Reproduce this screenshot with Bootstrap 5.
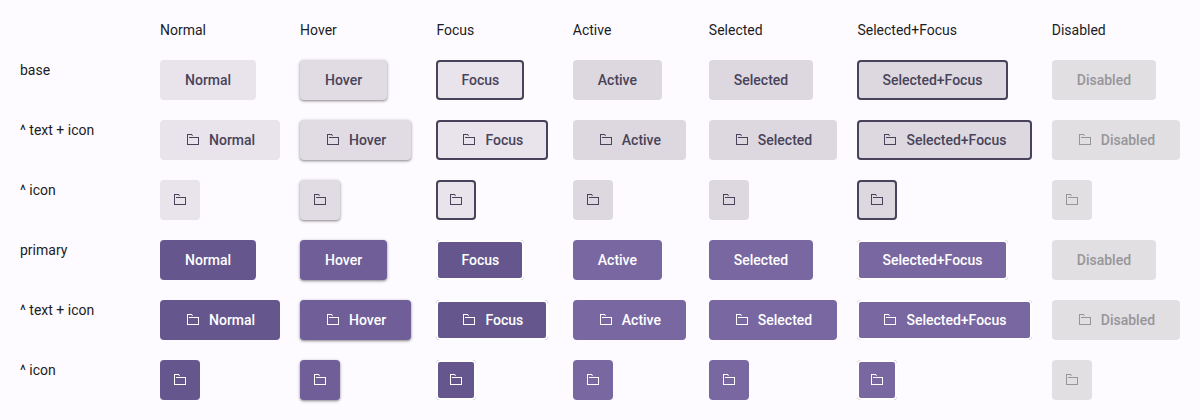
<!DOCTYPE html>
<html lang="en">
<head>
<meta charset="utf-8">
<meta name="viewport" content="width=device-width, initial-scale=1">
<title>Button states</title>
<link href="https://cdn.jsdelivr.net/npm/bootstrap@5.3.0/dist/css/bootstrap.min.css" rel="stylesheet">
<style>
  body { background: #fdfbff; color: #1c1b1e; font: 400 14px/20px Roboto, sans-serif; }
  .state-grid { grid-template-columns: 120px 120.1px 116.32px 116.4px 116.04px 128.6px 174.34px 1fr; gap: 20px; padding: 20px; justify-items: start; }
  .state-btn {
    --bs-btn-padding-x: 24px; --bs-btn-padding-y: 9px;
    --bs-btn-font-size: 14px; --bs-btn-font-weight: 500; --bs-btn-line-height: 20px;
    --bs-btn-border-radius: 4px; --bs-btn-border-width: 1px;
    --bs-btn-disabled-opacity: 1;
    --bs-btn-disabled-bg: #e1dfe2; --bs-btn-disabled-color: #979599; --bs-btn-disabled-border-color: transparent;
    height: 40px; gap: 8px; transition: none;
  }
  .state-btn.icon-only { --bs-btn-padding-x: 0; width: 40px; }
  .state-btn svg { width: 16px; height: 16px; fill: currentColor; }
  .tone-base { --bs-btn-bg: #e9e4eb; --bs-btn-color: #48435a; --ring: #48435a; }
  .tone-base.is-hover { --bs-btn-bg: #e1dce3; }
  .tone-base.is-on { --bs-btn-bg: #ddd8df; }
  .tone-primary { --bs-btn-bg: #65568e; --bs-btn-color: #fff; --ring: #fff; }
  .tone-primary.is-hover { --bs-btn-bg: #705e98; }
  .tone-primary.is-on { --bs-btn-bg: #7967a2; }
  .is-hover { box-shadow: 0 1px 2px rgba(0,0,0,.3), 0 1px 3px 1px rgba(0,0,0,.15); }
  .state-btn.is-focus { border: 0; padding: 10px 25.25px 10px 25px; box-shadow: inset 0 0 0 2px var(--ring); }
  .state-btn.icon-only.is-focus { padding: 10px 0; }
</style>
</head>
<body>
<svg class="d-none"><symbol id="folder" viewBox="0 0 16 16">
  <path d="M2 2h5v1H3v9h10V6H4V5h10v8H2z"/><path d="M6 2.5h1.2L8 3.3V4H7z" opacity=".7"/>
</symbol></svg>
<main class="state-grid d-grid" id="states"></main>
<script src="https://cdn.jsdelivr.net/npm/bootstrap@5.3.0/dist/js/bootstrap.bundle.min.js"></script>
<script>
  const states = [['Normal', ''], ['Hover', 'is-hover'], ['Focus', 'is-focus'], ['Active', 'is-on'],
    ['Selected', 'is-on'], ['Selected+Focus', 'is-on is-focus'], ['Disabled', '']];
  const icon = '<svg aria-hidden="true"><use href="#folder"/></svg>';
  let html = '<div></div>' + states.map(([s]) => `<div>${s}</div>`).join('');
  for (const tone of ['base', 'primary']) {
    for (const kind of ['text', 'both', 'icon']) {
      html += `<div>${{ text: tone, both: '^ text + icon', icon: '^ icon' }[kind]}</div>`;
      for (const [name, cls] of states) {
        html += `<button type="button" aria-label="${name}" class="btn state-btn d-inline-flex align-items-center justify-content-center tone-${tone} ${cls} ${kind === 'icon' ? 'icon-only' : ''}"${name === 'Disabled' ? ' disabled' : ''}>${kind === 'text' ? '' : icon}${kind === 'icon' ? '' : `<span>${name}</span>`}</button>`;
      }
    }
  }
  document.getElementById('states').innerHTML = html;
</script>
</body>
</html>
